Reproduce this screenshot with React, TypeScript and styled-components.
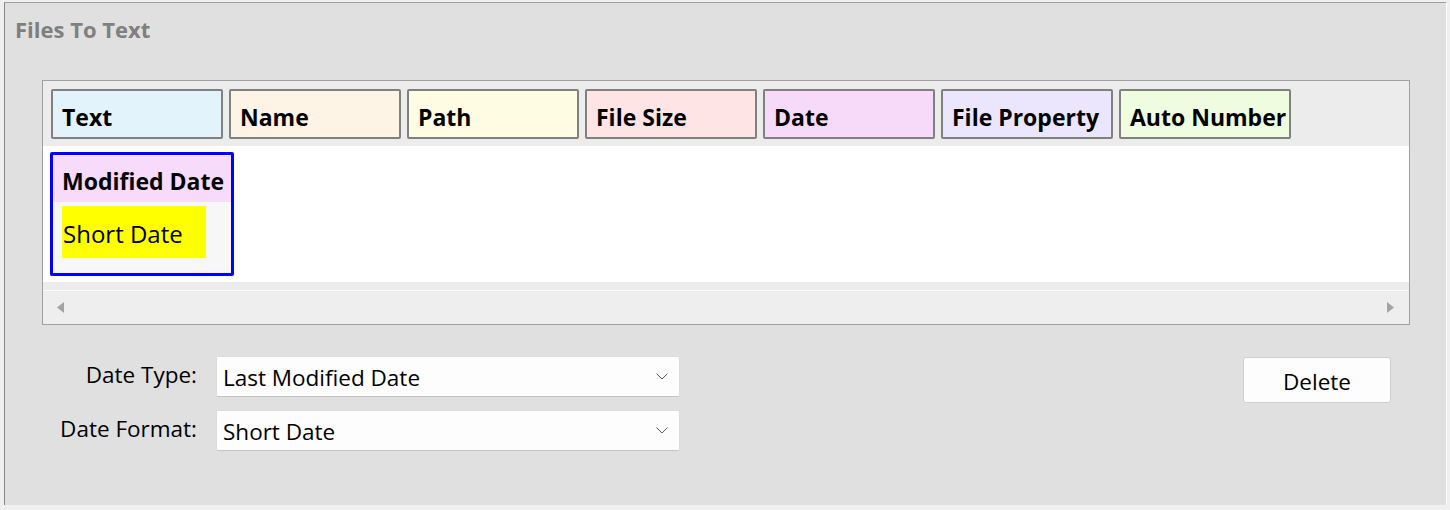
import React from "react";
import styled, { createGlobalStyle } from "styled-components";

const GlobalStyle = createGlobalStyle`
  html, body {
    margin: 0;
    padding: 0;
    background: #f0f0f0;
  }
  body {
    font-family: "Open Sans", "Noto Sans", "Liberation Sans", sans-serif;
    color: #000;
  }
`;

const Frame = styled.div`
  box-sizing: border-box;
  margin: 2px 0 0 4px;
  width: 1443px;
  height: 503px;
  background: #e0e0e0;
  border-top: 1px solid #a0a0a0;
  border-left: 1px solid #888888;
  border-right: 1px solid #ffffff;
`;

const Title = styled.div`
  padding: 12px 0 0 10px;
  font-size: 22px;
  line-height: 28px;
  font-weight: 700;
  color: #7f7f7f;
`;

const GridBox = styled.div`
  box-sizing: border-box;
  margin: 37px 0 0 37px;
  width: 1368px;
  border: 1px solid #a0a0a0;
  background: #ececec;
`;

const HeaderRow = styled.div`
  display: flex;
  gap: 6px;
  height: 65px;
  box-sizing: border-box;
  padding: 8px 0 0 8px;
`;

const Chip = styled.div<{ $bg: string }>`
  box-sizing: border-box;
  width: 172px;
  height: 50px;
  padding: 11px 0 0 9px;
  border: 2px solid #808080;
  border-radius: 2px;
  background: ${({ $bg }) => $bg};
  font-size: 23px;
  line-height: 30px;
  font-weight: 700;
  white-space: nowrap;
`;

const Canvas = styled.div`
  height: 136px;
  background: #ffffff;
  box-sizing: border-box;
  padding: 6px 0 0 7px;
`;

const Strip = styled.div`
  height: 8px;
  background: #ececec;
  border-bottom: 1px solid #fafafa;
`;

const ScrollBar = styled.div`
  height: 33px;
  background: #eeeeee;
  display: flex;
  align-items: center;
  justify-content: space-between;
  padding: 0 15px 0 14px;
`;

const Card = styled.div`
  box-sizing: border-box;
  width: 184px;
  height: 124px;
  border: 3px solid #0000ff;
  border-radius: 2px;
  background: #f7f7f7;
`;

const CardHeader = styled.div`
  height: 47px;
  box-sizing: border-box;
  padding: 11px 0 0 9px;
  background: #f8dafa;
  font-size: 23px;
  line-height: 30px;
  font-weight: 700;
  white-space: nowrap;
`;

const Token = styled.div`
  box-sizing: border-box;
  width: 144px;
  height: 52px;
  margin: 4px 0 0 9px;
  padding: 12px 0 0 1px;
  background: #ffff00;
  font-size: 24px;
  line-height: 32px;
  white-space: nowrap;
`;

const Form = styled.div`
  display: flex;
  justify-content: space-between;
  align-items: flex-start;
  width: 1368px;
  margin: 31px 0 0 37px;
`;

const Fields = styled.div`
  display: grid;
  grid-template-columns: 155px 464px;
  column-gap: 19px;
  row-gap: 13px;
  align-items: center;
`;

const Label = styled.div`
  text-align: right;
  font-size: 22.5px;
  line-height: 28px;
  margin-top: -3px;
  color: #000;
`;

const Combo = styled.div`
  box-sizing: border-box;
  height: 41px;
  display: flex;
  align-items: center;
  justify-content: space-between;
  padding: 3px 11px 0 6px;
  background: #fdfdfd;
  border: 1px solid #dcdcdc;
  border-bottom-color: #c4c4c4;
  border-radius: 2px;
  font-size: 22.5px;
  line-height: 28px;

  svg {
    margin-top: -3px;
  }
`;

const Button = styled.button`
  box-sizing: border-box;
  width: 148px;
  height: 46px;
  margin: 1px 19px 0 0;
  padding: 2px 0 0;
  background: #fdfdfd;
  border: 1px solid #cfcfcf;
  border-radius: 3px;
  font-family: inherit;
  font-size: 22.5px;
  color: #000;
`;

const Chevron = () => (
  <svg width="12" height="7" viewBox="0 0 12 7">
    <path d="M0.5 0.5 L6 6 L11.5 0.5" fill="none" stroke="#5a5a5a" strokeWidth="1" />
  </svg>
);

const Arrow = ({ dir }: { dir: "left" | "right" }) => (
  <svg width="7" height="11" viewBox="0 0 7 11">
    <path d={dir === "left" ? "M7 0 L0 5.5 L7 11 Z" : "M0 0 L7 5.5 L0 11 Z"} fill="#a3a3a3" />
  </svg>
);

const chips = [
  { label: "Text", bg: "#e2f3fb" },
  { label: "Name", bg: "#fdf4e6" },
  { label: "Path", bg: "#fefde4" },
  { label: "File Size", bg: "#fee4e4" },
  { label: "Date", bg: "#f7dafa" },
  { label: "File Property", bg: "#ebe6fd" },
  { label: "Auto Number", bg: "#effcdf" },
];

export default function App() {
  return (
    <>
      <GlobalStyle />
      <Frame>
        <Title>Files To Text</Title>
        <GridBox>
          <HeaderRow>
            {chips.map((c) => (
              <Chip key={c.label} $bg={c.bg}>
                {c.label}
              </Chip>
            ))}
          </HeaderRow>
          <Canvas>
            <Card>
              <CardHeader>Modified Date</CardHeader>
              <Token>Short Date</Token>
            </Card>
          </Canvas>
          <Strip />
          <ScrollBar>
            <Arrow dir="left" />
            <Arrow dir="right" />
          </ScrollBar>
        </GridBox>
        <Form>
          <Fields>
            <Label>Date Type:</Label>
            <Combo>
              <span>Last Modified Date</span>
              <Chevron />
            </Combo>
            <Label>Date Format:</Label>
            <Combo>
              <span>Short Date</span>
              <Chevron />
            </Combo>
          </Fields>
          <Button>Delete</Button>
        </Form>
      </Frame>
    </>
  );
}
